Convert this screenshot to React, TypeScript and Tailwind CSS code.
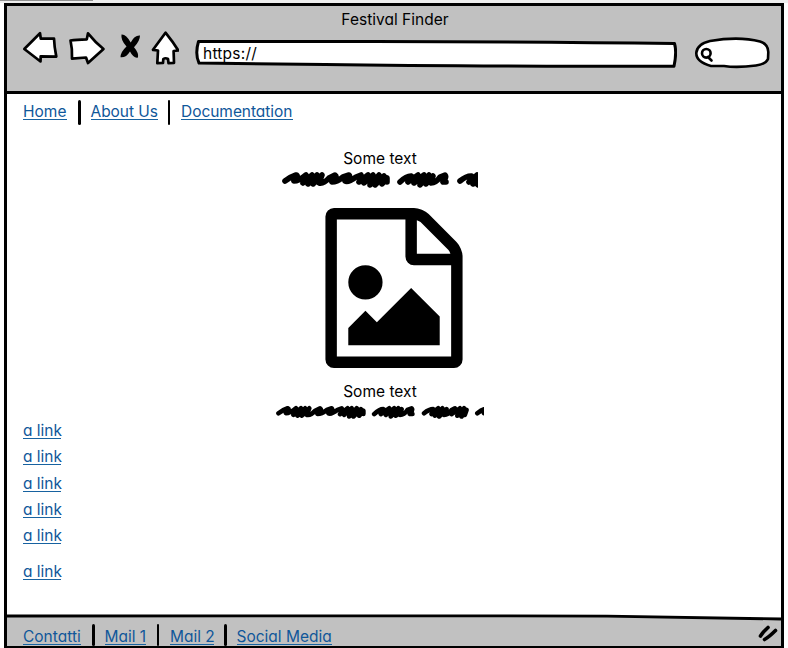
import React from "react";

const type = "font-['Inter','Liberation_Sans',sans-serif] text-[15.5px] leading-[20px] whitespace-nowrap [font-feature-settings:'cv11']";

function Link({ children, className = "" }: { children: React.ReactNode; className?: string }) {
  return (
    <a href="#" className={`block h-[18px] shrink-0 border-b border-[#1762a0] text-[#10579a] ${className}`}>
      {children}
    </a>
  );
}

function Divider({ className = "" }: { className?: string }) {
  return <span className={`w-[2.5px] shrink-0 rounded-full bg-black ${className}`} />;
}

function Scribble({ units, className }: { units: number; className: string }) {
  return (
    <svg viewBox={`0 0 ${units} 17`} preserveAspectRatio="none" className={className} fill="none" stroke="#000" strokeWidth="5.600" strokeLinecap="round" strokeLinejoin="round">
      <path d="M3 10Q8 6 14 4Q17 5 12 10Q17 10 24 4Q25 6 21 12L30 4L26 13L35 4L31 13L40 4L37 12Q42 13 47 7L53 4Q56 6 50 11Q55 11 61 6L67 4Q69 6 63 10Q66 12 74 6L79 4Q80 7 77 11L86 4L82 12L91 4L88 14L97 4L93 14L102 5L100 13L105 7L105 11" />
      <path d="M118 11Q124 5 129 5Q132 6 126 11L136 4L132 12L142 4L138 14L147 4L144 13L151 5L149 12Q154 12 158 6L163 4Q165 6 161 11L164 11" />
      <path d="M178 10Q184 5 189 5Q192 6 187 11L195 4L191 13L200 4L196 14L205 5L202 12Q207 12 211 6L215 4Q216 7 211 11L221 4L218 13L226 4L223 14L229 6L227 12" />
      <path d="M242 10Q248 5 254 4Q256 6 250 10L262 4" />
    </svg>
  );
}

export default function App() {
  return (
    <div className={`flex h-[648px] w-[788px] flex-col overflow-hidden bg-white text-black ${type}`}>
      <div className="h-[3px] shrink-0 bg-[#eeeeee]">
        <div className="h-px w-[93px] bg-[#919191]" />
      </div>
      <div className="ml-1 flex h-[645px] w-[780px] flex-col border-[3px] border-b-2 border-black bg-white">
        <header className="flex h-[88px] shrink-0 flex-col border-b-[3px] border-black bg-[#c1c1c1]">
          <div className="mt-1 h-5 pl-[2px] text-center tracking-[0.02px]">Festival Finder</div>
          <div className="flex h-10 items-start pl-[15px]">
            <svg width="120" height="40" viewBox="22 30 120 40" className="mr-[9px] shrink-0" fill="#fff" stroke="#000" strokeWidth="2.7" strokeLinejoin="round" strokeLinecap="round">
              <path d="M24.300 49L40 33.300L40.800 38.700L54 38.500Q54.300 47 56.300 56.600L40.700 56.300L40.500 61.500Q31.500 54.500 24.300 49Z" />
              <path d="M70.500 40.500Q76 39.500 86.800 39.300L88 33.300Q95 42 103.500 49L88 63L86 57.500L72 58.600Q72.500 49 70.500 40.500Z" />
              <path stroke="none" fill="#000" d="M121.500 34.500Q126 34 130.700 42.500Q134.500 35 140 35.500Q140 41 134 47.200Q139 53 138 57.500Q133.500 58.500 130 51.500Q126 58 120.500 57.300Q120.500 52 126.500 46.500Q120.500 40 121.500 34.500Z" />
            </svg>
            <svg width="28" height="36" viewBox="151 30 28 36" className="mr-[16px] shrink-0" fill="#fff" stroke="#000" strokeWidth="2.700" strokeLinejoin="round">
              <path d="M165.500 32.700L153 49.800L158 50.500L157.300 63.200L163 62.800L163.300 59Q165.500 57.500 168 59L168.500 63.200L174 62.800L173.600 51L178.300 50.500Q173 42 165.500 32.700Z" />
            </svg>
            <div className="relative mt-[10px] h-[28px] w-[482px] shrink-0">
              <svg width="482" height="28" viewBox="0 0 482 28" className="absolute inset-0" fill="#fff" stroke="#000" strokeWidth="3" strokeLinejoin="round">
                <path d="M3.500 1.500L180 1.500Q340 1.700 479.500 3.500Q482 12 479 26.300Q260 26.300 130 24.500L4 23Q-.2 14 3.500 1.500Z" />
              </svg>
              <span className="absolute left-2 top-[4px] tracking-[0.22px]">https://</span>
            </div>
            <svg width="76" height="32" viewBox="694 37 76 32" className="ml-[17px] mt-[7px] shrink-0" fill="#fff" stroke="#000" strokeWidth="2.600" strokeLinecap="round">
              <path d="M710 41Q739 36 760 41.500Q768 44 768.300 52L768 59Q766 64 756 65.500Q737 68 724 66L711 66Q696 62 696.300 53Q697 44 710 41Z" />
              <circle cx="706.300" cy="53.300" r="4.300" />
              <path d="M708 57L711.500 60.500" />
            </svg>
          </div>
        </header>

        <main className="flex flex-1 flex-col px-4">
          <nav className="mt-[6px] flex h-6 items-start">
            <Link className="mt-[2px] h-[17px] w-[44px]">Home</Link>
            <Divider className="ml-[11px] h-[25px]" />
            <Link className="ml-[10px] mt-[2px] h-[17px] w-[67px] tracking-[-0.06px]">About Us</Link>
            <Divider className="ml-[10px] h-[25px]" />
            <Link className="ml-[11px] mt-[2px] h-[17px] w-[112px] tracking-[-0.04px]">Documentation</Link>
          </nav>
          <section className="ml-[253px] mt-[25px] flex w-[208px] flex-col items-center">
            <div className="h-5">Some text</div>
            <Scribble units={196} className="mt-[2px] h-[17px] w-[196px]" />
            <svg viewBox="0 0 1536 1792" className="ml-[28px] mt-5 h-[160px] w-[138px]" fill="#000">
              <path d="M1468 380q28 28 48 76t20 88v1152q0 40-28 68t-68 28h-1344q-40 0-68-28t-28-68v-1600q0-40 28-68t68-28h896q40 0 88 20t76 48zM1024 136v376h376q-10-29-22-41l-313-313q-12-12-41-22zM1408 1664v-1024h-416q-40 0-68-28t-28-68v-416h-768v1536h1280zM1280 1216v320h-1024v-192l192-192 128 128 384-384zM448 1024q-80 0-136-56t-56-136 56-136 136-56 136 56 56 136-56 136-136 56z" />
            </svg>
            <div className="mt-[14px] h-5">Some text</div>
            <Scribble units={250} className="mt-[3px] h-[14px] w-[208px]" />
          </section>
          <div className="mt-[2px] flex flex-col items-start gap-[8px]">
            <Link className="w-[38px]">a link</Link>
            <Link className="w-[38px]">a link</Link>
            <Link className="mt-px w-[38px]">a link</Link>
            <Link className="w-[38px]">a link</Link>
            <Link className="w-[38px]">a link</Link>
            <Link className="mt-[10px] w-[38px]">a link</Link>
          </div>
        </main>

        <footer className="flex h-[32px] shrink-0 flex-col bg-[#c1c1c1]">
          <svg width="774" height="7" viewBox="0 0 774 7" className="shrink-0">
            <path fill="#fff" d="M0 0H774V5L650 2L450 1H0Z" />
            <path fill="none" stroke="#000" strokeWidth="2.800" d="M0 2L440 1.800L600 2.200L774 5" />
          </svg>
          <div className="flex h-[25px] items-start pl-4">
            <Link className="mt-[6px] h-[17px] w-[58px]">Contatti</Link>
            <Divider className="ml-[11px] mt-[3px] h-[22px]" />
            <Link className="ml-[10px] mt-[6px] h-[17px] w-[41px]">Mail 1</Link>
            <Divider className="ml-[11px] mt-[3px] h-[22px]" />
            <Link className="ml-[11px] mt-[6px] h-[17px] w-[44px]">Mail 2</Link>
            <Divider className="ml-[10px] mt-[3px] h-[22px]" />
            <Link className="ml-[10px] mt-[6px] h-[17px] w-[95px]">Social Media</Link>
            <svg width="20" height="18" viewBox="0 0 20 18" className="ml-auto mr-[3px] mt-[4px]" fill="none" stroke="#000" strokeWidth="3.600" strokeLinecap="round">
              <path d="M2.500 11Q5 7 10 2.500M6.500 14.500Q11 12 17.500 5.500" />
            </svg>
          </div>
        </footer>
      </div>
    </div>
  );
}
